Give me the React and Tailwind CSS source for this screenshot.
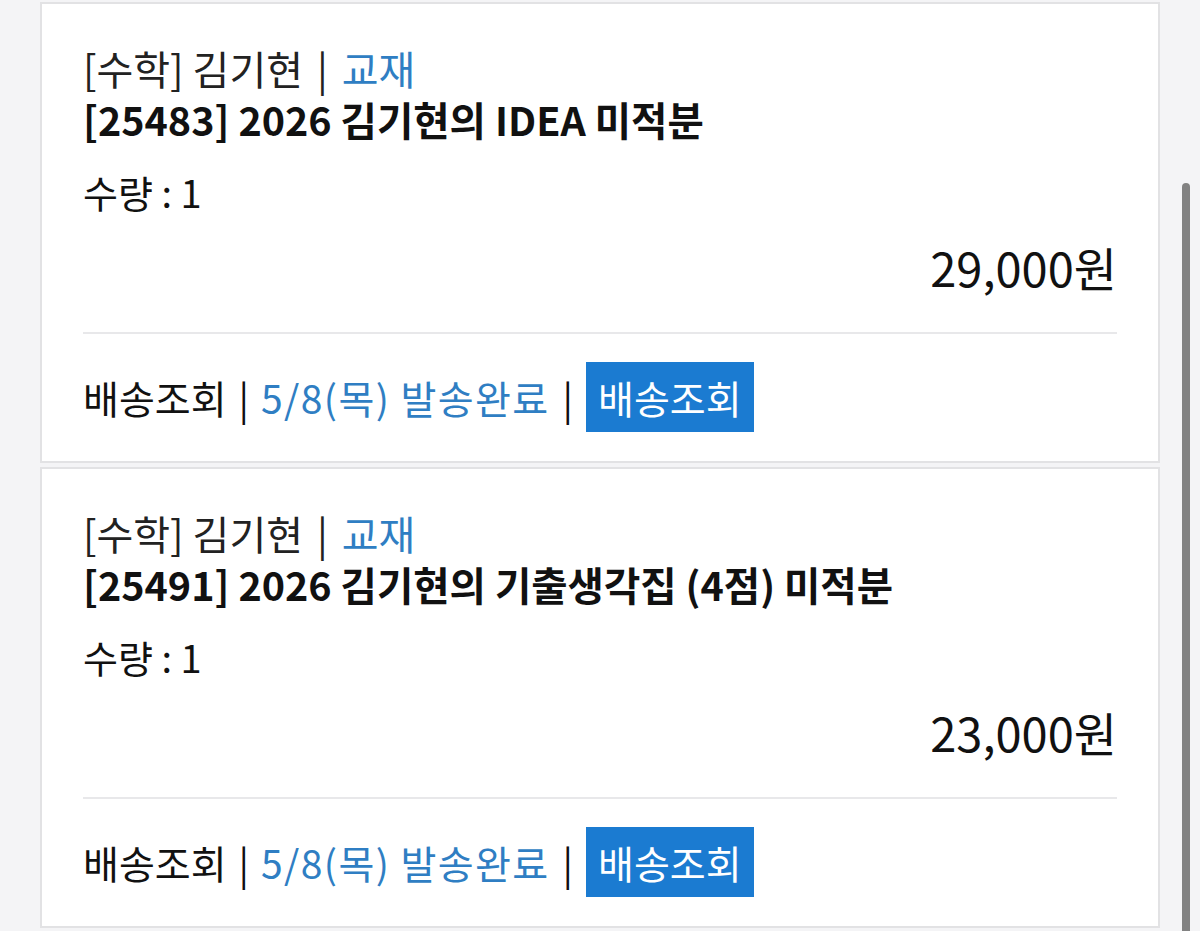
import React from 'react';

const items = [
  { id: '25483', title: '2026 김기현의 IDEA 미적분', price: '29,000원' },
  { id: '25491', title: '2026 김기현의 기출생각집 (4점) 미적분', price: '23,000원' },
];

function OrderCard({ item }) {
  return (
    <div className="border-2 border-[#e2e2e4] bg-white pl-[41px] pr-[41px] pt-[39px] pb-[29px]">
      <div className="flex text-[40px] leading-[50px] text-[#222]">
        <span>[수학] 김기현</span>
        <span className="mx-[14px]">|</span>
        <span className="text-[#2f7ec3]">교재</span>
      </div>
      <div className="text-[39.5px] leading-[52px] font-bold text-[#111]">
        [{item.id}] {item.title}
      </div>
      <div className="mt-[22px] text-[38px] leading-[50px] text-[#111]">수량 : 1</div>
      <div className="mt-[25px] text-right text-[47px] leading-[50px] text-[#111]">{item.price}</div>
      <div className="mt-[40px] h-[2px] bg-[#e8e8ea]" />
      <div className="mt-[28px] flex h-[70px] items-center text-[39px] text-[#111]">
        <span>배송조회</span>
        <span className="mx-[12px]">|</span>
        <span className="tracking-[1.4px] text-[#2f7ec3]">5/8(목) 발송완료</span>
        <span className="mx-[13px]">|</span>
        <button type="button" className="flex h-[70px] items-center bg-[#1b7bd1] px-[12px] text-white">
          배송조회
        </button>
      </div>
    </div>
  );
}

export default function App() {
  return (
    <div
      className="relative h-[931px] overflow-hidden bg-[#f4f4f6] pt-[2px] pl-[40px] pr-[40px]"
      style={{ fontFamily: '"Noto Sans CJK KR", "Noto Sans", sans-serif' }}
    >
      <div className="flex w-[1120px] flex-col gap-[4px]">
        {items.map((item) => (
          <OrderCard key={item.id} item={item} />
        ))}
      </div>
      {/* scrollbar thumb */}
      <div className="absolute left-[1182px] top-[183px] h-[800px] w-[8px] rounded-full bg-[#828282]" />
    </div>
  );
}
